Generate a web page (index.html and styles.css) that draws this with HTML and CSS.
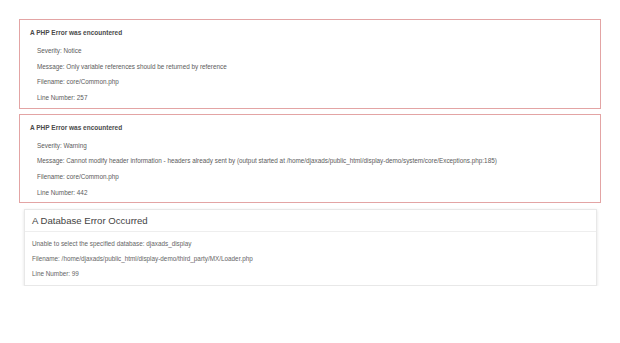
FILE: index.html
```html
<!DOCTYPE html>
<html>
    <head>
        <title>Database Error</title>
        <link rel="stylesheet" href="styles.css">
    </head>
    <body>
        <div class="php-error">
            <h4>A PHP Error was encountered</h4>
            <p>Severity: Notice</p>
            <p>Message:  Only variable references should be returned by reference</p>
            <p>Filename: core/Common.php</p>
            <p>Line Number: 257</p>
        </div>
        <div class="php-error">
            <h4>A PHP Error was encountered</h4>
            <p>Severity: Warning</p>
            <p>Message:  Cannot modify header information - headers already sent by (output started at /home/djaxads/public_html/display-demo/system/core/Exceptions.php:185)</p>
            <p>Filename: core/Common.php</p>
            <p>Line Number: 442</p>
        </div>
        <div class="container">
            <h1>A Database Error Occurred</h1>
            <p>Unable to select the specified database: djaxads_display</p>
            <p>Filename: /home/djaxads/public_html/display-demo/third_party/MX/Loader.php</p>
            <p>Line Number: 99</p>
        </div>
    </body>
</html>
```

FILE: styles.css
```css
body {
    font-family: "Liberation Sans", Arial, sans-serif;
    background: #fff;
    color: #5c5c5c;
    margin: 0;
    padding: 19px 19px 0 19px;
    font-size: 6.35px;
}
.php-error {
    border: 1px solid #e3a4a4;
    padding: 8px 10px 2px 10px;
    margin-bottom: 5px;
    width: 560px;
}
.php-error h4 {
    margin: 0 0 5px 0;
    font-size: 6.5px;
    line-height: 10px;
    color: #4a4a4a;
}
.php-error p {
    margin: 0;
    padding-left: 7px;
    line-height: 15.67px;
}
.container {
    margin: 6px 4px 0 5px;
    border: 1px solid #e8e8e8;
    box-shadow: 0 1px 3px rgba(0, 0, 0, 0.12);
    padding-bottom: 4px;
}
.container h1 {
    margin: 0 0 4px 0;
    padding: 0 7px;
    font-size: 9.6px;
    font-weight: normal;
    line-height: 21px;
    color: #444;
    border-bottom: 1px solid #eee;
}
.container p {
    margin: 0;
    padding: 0 7px;
    line-height: 15px;
    color: #666;
}
```
